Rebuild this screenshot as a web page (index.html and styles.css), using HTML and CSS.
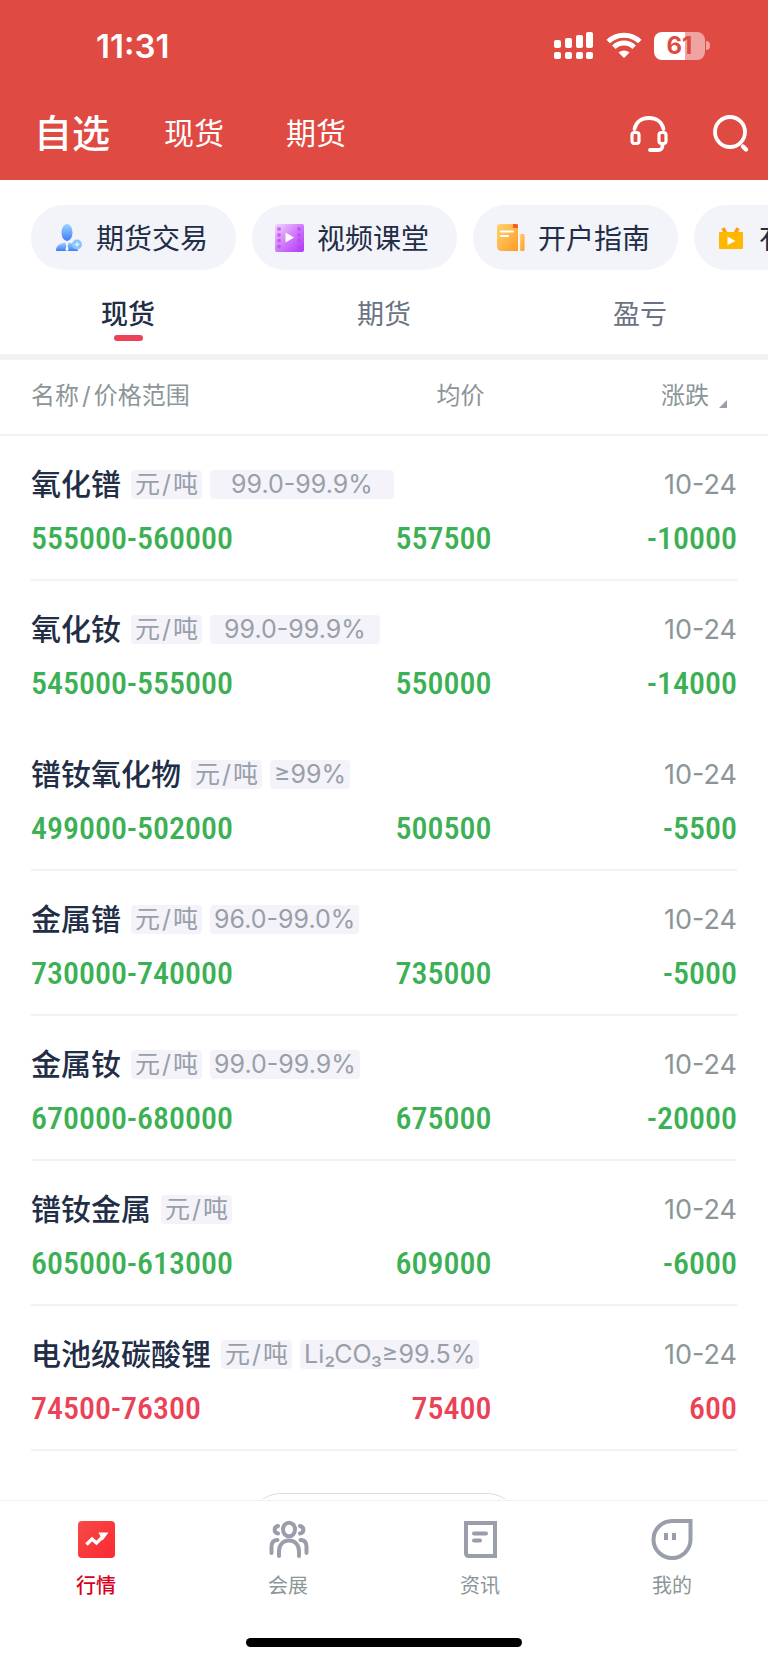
FILE: index.html
```html
<!DOCTYPE html>
<html lang="zh-CN">
<head>
<meta charset="utf-8">
<meta name="viewport" content="width=device-width, initial-scale=1">
<title>行情</title>
<link rel="stylesheet" href="styles.css">
</head>
<body>

<header class="header">
  <div class="status">
    <span class="time">11:31</span>
    <div class="status-icons">
      <svg width="40" height="28" viewBox="0 0 40 28" fill="#fff">
        <rect x="0" y="8" width="7" height="8" rx="2"/><rect x="11" y="6" width="7" height="10" rx="2"/>
        <rect x="22" y="3" width="7" height="13" rx="2"/><rect x="32" y="0" width="7" height="16" rx="2"/>
        <rect x="0" y="20" width="7" height="7" rx="2"/><rect x="11" y="20" width="7" height="7" rx="2"/>
        <rect x="22" y="20" width="7" height="7" rx="2"/><rect x="32" y="20" width="7" height="7" rx="2"/>
      </svg>
      <svg width="36" height="28" viewBox="0 0 36 28" fill="none" stroke="#fff" stroke-width="5">
        <path d="M2.200 9.500C11 1 25 1 33.800 9.500"/>
        <path d="M7.800 15.200C13.500 9.700 22.500 9.700 28.200 15.200"/>
        <path d="M18 26L12.500 20.600C15.500 17.700 20.500 17.700 23.500 20.600Z" fill="#fff" stroke="none"/>
      </svg>
      <div class="battery"><span>61</span></div>
    </div>
  </div>
  <div class="topbar">
    <nav class="top-tabs">
      <a href="#" class="current">自选</a>
      <a href="#">现货</a>
      <a href="#">期货</a>
    </nav>
    <div class="top-actions">
      <button type="button" aria-label="客服">
        <svg width="38" height="38" viewBox="0 0 38 38" fill="none" stroke="#fff" stroke-width="3.800" stroke-linecap="round">
          <path d="M4.500 14C6 6.500 12 3 19 3S32 6.500 33.500 14"/>
          <rect x="2" y="17.500" width="7" height="11" rx="2.500" stroke-width="3.200"/>
          <rect x="29" y="17.500" width="7" height="11" rx="2.500" stroke-width="3.200"/>
          <path d="M32.500 30C32.500 34 31 35 28 35H20"/>
        </svg>
      </button>
      <button type="button" aria-label="搜索">
        <svg width="38" height="38" viewBox="0 0 38 38" fill="none" stroke="#fff" stroke-width="3.800">
          <circle cx="18" cy="17" r="15"/>
          <path d="M31 31.500L34 34.500" stroke-linecap="round" stroke-width="4.400"/>
        </svg>
      </button>
    </div>
  </div>
</header>

<div class="chips">
  <a href="#" class="chip">
    <svg width="30" height="30" viewBox="0 0 30 30">
      <defs><linearGradient id="blue" x1="0" y1="0" x2="0" y2="1"><stop offset="0" stop-color="#9bd3ff"/><stop offset="1" stop-color="#3f7cf6"/></linearGradient></defs>
      <ellipse cx="13" cy="9.500" rx="5.500" ry="8.500" fill="url(#blue)"/>
      <path d="M2 28C2 22 6 21 11 19.500L13 22L15 19.500C20 21 24 22 24 28Z" fill="url(#blue)"/>
      <path d="M11.500 20L13 21.500L14.500 20L13.600 22.500L14.500 27L13 28L11.500 27L12.400 22.500Z" fill="#fff"/>
      <circle cx="23" cy="21.500" r="5" fill="#8cc4ff"/>
      <path d="M23 18.500L24 20.500L26 21.500L24 22.500L23 24.500L22 22.500L20 21.500L22 20.500Z" fill="#d6edff"/>
    </svg>
    <span>期货交易</span>
  </a>
  <a href="#" class="chip">
    <svg width="30" height="30" viewBox="0 0 30 30">
      <defs><linearGradient id="purple" x1="0" y1="0" x2="1" y2="1"><stop offset="0" stop-color="#f3d6fd"/><stop offset=".5" stop-color="#d17bfb"/><stop offset="1" stop-color="#ad35f8"/></linearGradient></defs>
      <rect x="0" y="1" width="29" height="28" rx="2" fill="url(#purple)"/>
      <g fill="#b947ee" fill-opacity=".7">
        <circle cx="4" cy="6" r="2"/><circle cx="4" cy="12" r="2"/><circle cx="4" cy="17.500" r="2"/><circle cx="4" cy="23.500" r="2"/>
        <circle cx="24" cy="6" r="2"/><circle cx="24" cy="12" r="2"/><circle cx="24" cy="17.500" r="2"/><circle cx="24" cy="23.500" r="2"/>
      </g>
      <path d="M10.500 9.500L19 14.500L10.500 19.500Z" fill="#fff"/>
    </svg>
    <span>视频课堂</span>
  </a>
  <a href="#" class="chip">
    <svg width="30" height="30" viewBox="0 0 30 30">
      <defs><linearGradient id="orange" x1="0" y1="0" x2="1" y2="1"><stop offset="0" stop-color="#ffd36f"/><stop offset="1" stop-color="#ff9a24"/></linearGradient></defs>
      <path d="M4 1H22V28H6Q1 28 1 23V4Q1 1 4 1Z" fill="url(#orange)"/>
      <path d="M17 1H20Q22 1 22 3V5H17Z" fill="#fa5a22"/>
      <path d="M5 8.500H17M5 13H12" stroke="#fff" stroke-width="2" stroke-linecap="round"/>
      <rect x="24" y="11" width="4.500" height="17" rx="1" fill="url(#orange)"/>
    </svg>
    <span>开户指南</span>
  </a>
  <a href="#" class="chip">
    <svg width="30" height="30" viewBox="0 0 30 30">
      <path d="M6 5L9 11M21 5L18 11" stroke="#ff9f0a" stroke-width="3.800"/>
      <rect x="2" y="9" width="24" height="17" rx="1" fill="#ffb700"/>
      <path d="M10.500 13.500L18.500 18L10.500 22Z" fill="#fff"/>
    </svg>
    <span>有色直播</span>
  </a>
</div>

<nav class="tabs">
  <a href="#" class="active">现货</a>
  <a href="#">期货</a>
  <a href="#">盈亏</a>
</nav>

<main class="quotes">
  <table>
    <colgroup><col class="col-range"><col class="col-avg"><col class="col-change"></colgroup>
    <thead>
      <tr><th>名称<span class="slash">/</span>价格范围</th><th class="avg">均价</th><th class="change">涨跌<i class="sort"></i></th></tr>
    </thead>
    <tbody class="down">
      <tr class="title"><td colspan="2"><div class="name"><b>氧化镨</b><span class="tag">元<i>/</i>吨</span><span class="tag wide">99.0-99.9%</span></div></td><td class="date">10-24</td></tr>
      <tr class="price"><td>555000-560000</td><td>557500</td><td>-10000</td></tr>
    </tbody>
    <tbody class="down no-line">
      <tr class="title"><td colspan="2"><div class="name"><b>氧化钕</b><span class="tag">元<i>/</i>吨</span><span class="tag medium">99.0-99.9%</span></div></td><td class="date">10-24</td></tr>
      <tr class="price"><td>545000-555000</td><td>550000</td><td>-14000</td></tr>
    </tbody>
    <tbody class="down">
      <tr class="title"><td colspan="2"><div class="name"><b>镨钕氧化物</b><span class="tag">元<i>/</i>吨</span><span class="tag">≥99%</span></div></td><td class="date">10-24</td></tr>
      <tr class="price"><td>499000-502000</td><td>500500</td><td>-5500</td></tr>
    </tbody>
    <tbody class="down">
      <tr class="title"><td colspan="2"><div class="name"><b>金属镨</b><span class="tag">元<i>/</i>吨</span><span class="tag">96.0-99.0%</span></div></td><td class="date">10-24</td></tr>
      <tr class="price"><td>730000-740000</td><td>735000</td><td>-5000</td></tr>
    </tbody>
    <tbody class="down">
      <tr class="title"><td colspan="2"><div class="name"><b>金属钕</b><span class="tag">元<i>/</i>吨</span><span class="tag">99.0-99.9%</span></div></td><td class="date">10-24</td></tr>
      <tr class="price"><td>670000-680000</td><td>675000</td><td>-20000</td></tr>
    </tbody>
    <tbody class="down">
      <tr class="title"><td colspan="2"><div class="name"><b>镨钕金属</b><span class="tag">元<i>/</i>吨</span></div></td><td class="date">10-24</td></tr>
      <tr class="price"><td>605000-613000</td><td>609000</td><td>-6000</td></tr>
    </tbody>
    <tbody class="up">
      <tr class="title"><td colspan="2"><div class="name"><b>电池级碳酸锂</b><span class="tag">元<i>/</i>吨</span><span class="tag">Li₂CO₃≥99.5%</span></div></td><td class="date">10-24</td></tr>
      <tr class="price"><td>74500-76300</td><td>75400</td><td>600</td></tr>
    </tbody>
  </table>
  <div class="more"><button type="button" aria-label="添加"></button></div>
</main>

<footer class="footer">
  <nav class="bottom-nav">
    <a href="#" class="active">
      <svg width="42" height="42" viewBox="0 0 42 42">
        <defs><linearGradient id="red" x1="0" y1="0" x2="1" y2="1"><stop offset="0" stop-color="#f74a47"/><stop offset="1" stop-color="#fa2a32"/></linearGradient></defs>
        <rect x="3" y="3" width="37" height="37" rx="4" fill="url(#red)"/>
        <path d="M11.500 26.500L17 21L21.500 25L29 17.500" fill="none" stroke="#fff" stroke-width="3.400"/>
        <path d="M23.500 14.500H33.500L27.500 22.500Z" fill="#fff"/>
      </svg>
      行情
    </a>
    <a href="#">
      <svg width="42" height="42" viewBox="0 0 42 42" fill="none" stroke="#999eaa" stroke-width="4" stroke-linecap="round">
        <ellipse cx="22" cy="11.500" rx="6" ry="6.800"/>
        <path d="M12 38V33C12 19 32 19 32 33V38"/>
        <path d="M11 8C6.500 9 6.500 14.500 11 15.500M33 8C37.500 9 37.500 14.500 33 15.500"/>
        <path d="M10.500 22C6 22 4.500 25 4.500 29V35M33.500 22C38 22 39.500 25 39.500 29V35"/>
      </svg>
      会展
    </a>
    <a href="#">
      <svg width="42" height="42" viewBox="0 0 42 42" fill="none" stroke="#999eaa" stroke-width="4">
        <path d="M7 5H36V38H10Q7 38 7 35Z"/>
        <path d="M15 15.500H27M15 22.500H21" stroke-linecap="round"/>
      </svg>
      资讯
    </a>
    <a href="#">
      <svg width="42" height="42" viewBox="0 0 42 42" fill="none" stroke="#999eaa" stroke-width="4">
        <path d="M21 3H39.500V21A18.500 18.500 0 1 1 21 3Z"/>
        <path d="M15 15V22M23 15V22"/>
      </svg>
      我的
    </a>
  </nav>
  <div class="home-bar"></div>
</footer>

</body>
</html>
```
FILE: styles.css
```css
* {
  box-sizing: border-box;
}

body {
  margin: 0;
  min-height: 100vh;
  display: flex;
  flex-direction: column;
  background: #fff;
  color: #222d46;
  font-family: Inter, "Noto Sans CJK SC", sans-serif;
  overflow-x: hidden;
}

a {
  color: inherit;
  text-decoration: none;
}

button {
  padding: 0;
  border: none;
  background: none;
}

svg {
  display: block;
  flex: none;
}

i {
  font-style: normal;
}

/* Red header */
.header {
  background: #df4a43;
  color: #fff;
  height: 180px;
}

.status {
  display: flex;
  justify-content: space-between;
  align-items: center;
  height: 92px;
  padding: 0 63px 0 96px;
}

.time {
  font-size: 33px;
  font-weight: 600;
}

.status-icons {
  display: flex;
  align-items: center;
  gap: 12px;
}

.battery {
  position: relative;
  width: 51px;
  height: 28px;
  border-radius: 8px;
  background: linear-gradient(to right, #fff 61%, #f0a4a1 61%);
  color: #df4a43;
  font-size: 24px;
  font-weight: 700;
  line-height: 28px;
  text-align: center;
}

.battery::after {
  content: "";
  position: absolute;
  left: 52px;
  top: 9px;
  width: 4px;
  height: 9px;
  border-radius: 0 4px 4px 0;
  background: #f0a4a1;
}

.topbar {
  display: flex;
  justify-content: space-between;
  align-items: center;
  height: 84px;
  padding: 0 18px 0 34px;
}

.top-tabs {
  display: flex;
  align-items: center;
  gap: 62px;
  padding-bottom: 6px;
  font-size: 30px;
}

.top-tabs .current {
  margin-right: -8px;
  padding-top: 4px;
  font-size: 38px;
  font-weight: 500;
  line-height: 52px;
}

.top-actions {
  display: flex;
  gap: 44px;
}

/* Shortcut chips */
.chips {
  display: flex;
  gap: 16px;
  padding: 25px 0 0 31px;
  overflow: hidden;
}

.chip {
  flex: none;
  display: flex;
  align-items: center;
  gap: 12px;
  height: 65px;
  padding: 0 28px 0 23px;
  border-radius: 33px;
  background: #f3f4f9;
  font-size: 28px;
  white-space: nowrap;
}

.chip span {
  padding-bottom: 2px;
}

/* Category tabs */
.tabs {
  display: flex;
  height: 90px;
  border-bottom: 6px solid #f2f2f2;
  color: #6a7283;
  font-size: 27px;
  line-height: 40px;
}

.tabs a {
  flex: 1;
  padding-top: 25px;
  text-align: center;
}

.tabs .active {
  color: #222d46;
  font-weight: 500;
}

.tabs .active::after {
  content: "";
  display: block;
  width: 29px;
  height: 6px;
  margin: 0 auto;
  border-radius: 3px;
  background: #eb4257;
}

/* Price table */
.quotes {
  flex: 1;
}

table {
  width: 100%;
  table-layout: fixed;
  border-collapse: separate;
  border-spacing: 0;
}

.col-range {
  width: 38%;
}

.col-avg {
  width: 26%;
}

th {
  height: 76px;
  padding: 0 0 8px;
  border-bottom: 2px solid #f2f2f2;
  color: #8c9598;
  font-size: 24px;
  font-weight: 400;
  text-align: left;
}

.slash {
  padding: 0 3px;
}

.tag i {
  padding: 0 2px;
}

th.avg {
  padding-right: 7px;
  text-align: right;
}

th.change {
  padding-right: 41px;
  text-align: right;
}

.sort {
  display: inline-block;
  margin: 0 0 -4px 10px;
  border-left: 8px solid transparent;
  border-bottom: 8px solid #999eaa;
}

td {
  padding: 0;
}

th:first-child,
td:first-child {
  padding-left: 31px;
}

td:last-child {
  padding-right: 31px;
}

.title td {
  height: 80px;
  padding-top: 16px;
}

.name {
  display: flex;
  align-items: center;
  gap: 8px;
}

.name b {
  margin-right: 2px;
  font-size: 30px;
  font-weight: 500;
  line-height: 36px;
}

.tag {
  height: 29px;
  padding: 0 4px;
  border-radius: 4px;
  background: #f3f3f9;
  color: #999fa9;
  font-size: 25px;
  line-height: 29px;
  white-space: nowrap;
}

.tag.medium {
  padding: 0 14px;
}

.tag.wide {
  padding: 0 21px;
}

.date {
  color: #8c9598;
  font-size: 27px;
  text-align: right;
}

.price td {
  height: 65px;
  padding-bottom: 22px;
  font-family: "Roboto Condensed", Roboto, sans-serif;
  font-size: 32px;
  font-weight: 500;
  line-height: 40px;
  text-align: right;
  /* divider stops short of both screen edges */
  background: linear-gradient(#f2f2f2, #f2f2f2) left bottom / 100% 2px no-repeat;
}

.price td:first-child {
  text-align: left;
  background-position: right bottom;
  background-size: calc(100% - 31px) 2px;
}

.price td:last-child {
  background-size: calc(100% - 31px) 2px;
}

.no-line .price td {
  background: none;
}

.down .price {
  color: #3cb054;
}

.up .price {
  color: #eb4257;
}

/* top edge of the add button shows above the bottom bar */
.more {
  height: 48px;
  padding-top: 42px;
  overflow: hidden;
  text-align: center;
}

.more button {
  width: 272px;
  height: 66px;
  border: 1px solid #dcdcdc;
  border-radius: 33px;
}

/* Bottom navigation */
.footer {
  height: 162px;
  border-top: 1px solid #f0f0f0;
  background: #fff;
}

.bottom-nav {
  display: flex;
  padding-top: 17px;
  color: #8c9598;
  font-size: 20px;
  line-height: 30px;
}

.bottom-nav a {
  flex: 1;
  display: flex;
  flex-direction: column;
  align-items: center;
  gap: 11px;
}

.bottom-nav .active {
  color: #d9001b;
  font-weight: 500;
}

.home-bar {
  width: 36%;
  height: 9px;
  margin: 37px auto 0;
  border-radius: 5px;
  background: #000;
}
```
